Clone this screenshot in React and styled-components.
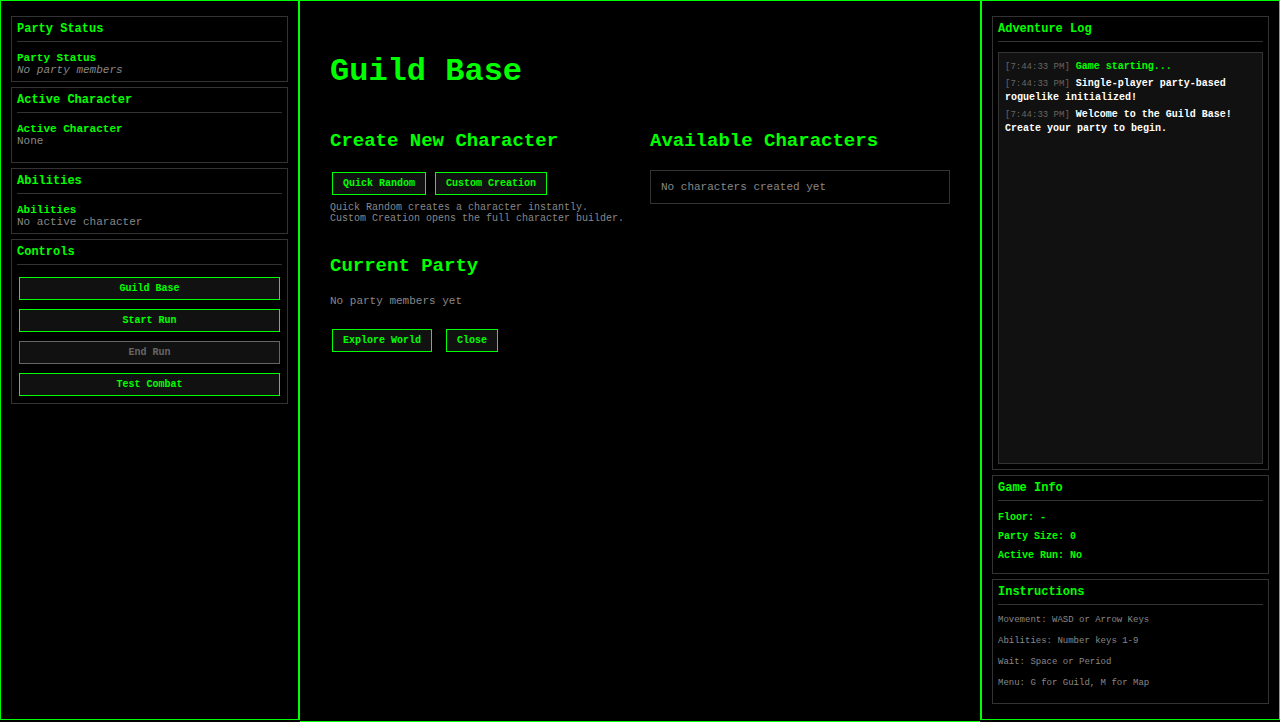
import React from "react";
import styled, { createGlobalStyle } from "styled-components";

const GlobalStyle = createGlobalStyle`
  * { box-sizing: border-box; }
  body {
    margin: 0;
    background: #000;
    color: #0f0;
    font-family: "Courier New", "Liberation Mono", monospace;
    font-size: 11px;
    line-height: 12px;
  }
  h1, h2, h3, h4, p, ul { margin: 0; padding: 0; }
`;

const Layout = styled.div`
  display: grid;
  grid-template-columns: 300px minmax(0, 1fr) 300px;
  min-height: 100vh;
`;

const Sidebar = styled.aside`
  display: flex;
  flex-direction: column;
  gap: 5px;
  margin-bottom: 2px;
  padding: 15px 10px;
  border: 1px solid #0f0;
  border-${(p) => (p.$side === "left" ? "right" : "left")}-width: 2px;
`;

const Panel = styled.section`
  display: flex;
  flex-direction: column;
  flex: ${(p) => (p.$grow ? "1" : "none")};
  padding: 5px;
  border: 1px solid #333;
`;

const PanelTitle = styled.h2`
  margin-bottom: 10px;
  padding-bottom: 5px;
  border-bottom: 1px solid #333;
  font-size: 12px;
  line-height: 14px;
`;

const SubTitle = styled.h3`
  font-size: 11px;
`;

const Muted = styled.p`
  color: #888;
  font-style: ${(p) => (p.$italic ? "italic" : "normal")};
`;

const CharacterSlot = styled.div`
  padding-bottom: 10px;
`;

const Button = styled.button`
  margin: 2px;
  padding: 5px 10px;
  border: 1px solid #0f0;
  border-radius: 0;
  background: #111;
  color: #0f0;
  font: bold 10px/11px "Courier New", "Liberation Mono", monospace;
  cursor: pointer;

  &:disabled {
    border-color: #666;
    color: #666;
    cursor: default;
  }
`;

const ButtonStack = styled.div`
  display: flex;
  flex-direction: column;
  gap: 5px;
`;

const ButtonRow = styled.div`
  display: flex;
  flex-wrap: wrap;
  gap: ${(p) => p.$gap}px;
`;

const Log = styled.div`
  display: flex;
  flex-direction: column;
  flex: 1;
  gap: 3px;
  padding: 7px 6px;
  border: 1px solid #333;
  background: #111;
  font-size: 10px;
  line-height: 14px;
`;

const LogEntry = styled.p`
  color: ${(p) => (p.$system ? "#0f0" : "#fff")};
  font-weight: bold;
`;

const LogTime = styled.time`
  color: #666;
  font-size: 9px;
  font-weight: normal;
`;

const InfoList = styled.div`
  display: flex;
  flex-direction: column;
  gap: 7px;
  padding: 1px 0 6px;
`;

const InfoLine = styled.p`
  font-size: 10px;
  font-weight: bold;
  line-height: 12px;
`;

const HelpList = styled.ul`
  display: flex;
  flex-direction: column;
  gap: 11px;
  padding-bottom: 10px;
  color: #888;
  font-size: 9px;
  line-height: 10px;
  list-style: none;
`;

const Main = styled.main`
  padding: 52px 30px;
  border-top: 1px solid #0f0;
  border-bottom: 1px solid #0f0;
`;

const PageTitle = styled.h1`
  margin-bottom: 40px;
  font-size: 32px;
  line-height: 37px;
`;

const Columns = styled.div`
  display: grid;
  grid-template-columns: repeat(2, minmax(0, 1fr));
  gap: 20px;
`;

const Column = styled.div`
  display: flex;
  flex-direction: column;
  gap: 31px;
`;

const SectionTitle = styled.h2`
  margin-bottom: 18px;
  font-size: 19px;
  line-height: 22px;
`;

const Hint = styled.p`
  margin-top: 5px;
  color: #888;
  font-size: 10px;
  line-height: 11px;
`;

const PartyBlock = styled.div`
  display: flex;
  flex-direction: column;
  gap: 20px;
`;

const CharacterBox = styled.div`
  padding: 10px;
  border: 1px solid #333;
`;

const controls = [
  { label: "Guild Base" },
  { label: "Start Run" },
  { label: "End Run", disabled: true },
  { label: "Test Combat" },
];

const log = [
  { text: "Game starting...", system: true },
  { text: "Single-player party-based roguelike initialized!" },
  { text: "Welcome to the Guild Base! Create your party to begin." },
];

const info = ["Floor: -", "Party Size: 0", "Active Run: No"];

const help = [
  "Movement: WASD or Arrow Keys",
  "Abilities: Number keys 1-9",
  "Wait: Space or Period",
  "Menu: G for Guild, M for Map",
];

export default function App() {
  return (
    <>
      <GlobalStyle />
      <Layout>
        <Sidebar $side="left">
          <Panel>
            <PanelTitle>Party Status</PanelTitle>
            <SubTitle>Party Status</SubTitle>
            <Muted $italic>No party members</Muted>
          </Panel>
          <Panel>
            <PanelTitle>Active Character</PanelTitle>
            <CharacterSlot>
              <SubTitle>Active Character</SubTitle>
              <Muted>None</Muted>
            </CharacterSlot>
          </Panel>
          <Panel>
            <PanelTitle>Abilities</PanelTitle>
            <SubTitle>Abilities</SubTitle>
            <Muted>No active character</Muted>
          </Panel>
          <Panel>
            <PanelTitle>Controls</PanelTitle>
            <ButtonStack>
              {controls.map((c) => (
                <Button key={c.label} type="button" disabled={c.disabled}>
                  {c.label}
                </Button>
              ))}
            </ButtonStack>
          </Panel>
        </Sidebar>

        <Main>
          <PageTitle>Guild Base</PageTitle>
          <Columns>
            <Column>
              <section>
                <SectionTitle>Create New Character</SectionTitle>
                <ButtonRow $gap={5}>
                  <Button type="button">Quick Random</Button>
                  <Button type="button">Custom Creation</Button>
                </ButtonRow>
                <Hint>
                  Quick Random creates a character instantly.
                  <br />
                  Custom Creation opens the full character builder.
                </Hint>
              </section>
              <section>
                <SectionTitle>Current Party</SectionTitle>
                <PartyBlock>
                  <Muted>No party members yet</Muted>
                  <ButtonRow $gap={10}>
                    <Button type="button">Explore World</Button>
                    <Button type="button">Close</Button>
                  </ButtonRow>
                </PartyBlock>
              </section>
            </Column>
            <section>
              <SectionTitle>Available Characters</SectionTitle>
              <CharacterBox>
                <Muted>No characters created yet</Muted>
              </CharacterBox>
            </section>
          </Columns>
        </Main>

        <Sidebar $side="right">
          <Panel $grow>
            <PanelTitle>Adventure Log</PanelTitle>
            <Log role="log">
              {log.map((entry) => (
                <LogEntry key={entry.text} $system={entry.system}>
                  <LogTime>[7:44:33 PM]</LogTime> {entry.text}
                </LogEntry>
              ))}
            </Log>
          </Panel>
          <Panel>
            <PanelTitle>Game Info</PanelTitle>
            <InfoList>
              {info.map((line) => (
                <InfoLine key={line}>{line}</InfoLine>
              ))}
            </InfoList>
          </Panel>
          <Panel>
            <PanelTitle>Instructions</PanelTitle>
            <HelpList>
              {help.map((line) => (
                <li key={line}>{line}</li>
              ))}
            </HelpList>
          </Panel>
        </Sidebar>
      </Layout>
    </>
  );
}
